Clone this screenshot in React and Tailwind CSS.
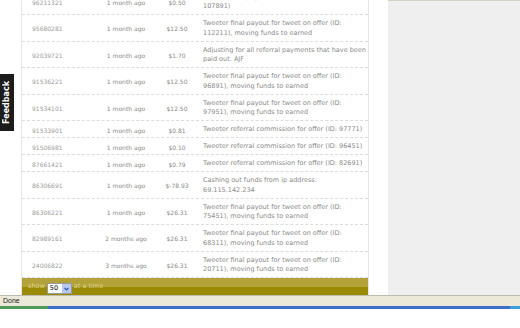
import React from "react";

const rows = [
  { id: "96211321", when: "1 month ago", amount: "$0.50", desc: ["Tweeter final payout for tweet on offer (ID:", "107891)"] },
  { id: "95680281", when: "1 month ago", amount: "$12.50", desc: ["Tweeter final payout for tweet on offer (ID:", "112211), moving funds to earned"] },
  { id: "92039721", when: "1 month ago", amount: "$1.70", desc: ["Adjusting for all referral payments that have been", "paid out. AJF"] },
  { id: "91536221", when: "1 month ago", amount: "$12.50", desc: ["Tweeter final payout for tweet on offer (ID:", "96891), moving funds to earned"] },
  { id: "91534101", when: "1 month ago", amount: "$12.50", desc: ["Tweeter final payout for tweet on offer (ID:", "97951), moving funds to earned"] },
  { id: "91533901", when: "1 month ago", amount: "$0.81", desc: ["Tweeter referral commission for offer (ID: 97771)"] },
  { id: "91506981", when: "1 month ago", amount: "$0.10", desc: ["Tweeter referral commission for offer (ID: 96451)"] },
  { id: "87661421", when: "1 month ago", amount: "$0.79", desc: ["Tweeter referral commission for offer (ID: 82691)"] },
  { id: "86306691", when: "1 month ago", amount: "$-78.93", desc: ["Cashing out funds from ip address:", "69.115.142.234"] },
  { id: "86306221", when: "1 month ago", amount: "$26.31", desc: ["Tweeter final payout for tweet on offer (ID:", "75451), moving funds to earned"] },
  { id: "82989161", when: "2 months ago", amount: "$26.31", desc: ["Tweeter final payout for tweet on offer (ID:", "68311), moving funds to earned"] },
  { id: "24006822", when: "3 months ago", amount: "$26.31", desc: ["Tweeter final payout for tweet on offer (ID:", "20711), moving funds to earned"] },
];

function App() {
  return (
    <div className="relative w-[520px] h-[328px] overflow-hidden bg-white font-['DejaVu_Sans',sans-serif]">
      <div className="flex h-[295px]">
        <div className="w-[21px] bg-white" />
        {/* transactions panel */}
        <div className="flex w-[348px] flex-col border-l border-r border-[#e6e6e6] bg-white">
          <div className="flex-1 overflow-hidden">
            <div className="-mt-[11.5px] text-[#8a8a8a]">
              {rows.map((r) => (
                <div
                  key={r.id}
                  className={`flex border-b border-dashed border-[#dcdcdc] ${r.desc.length > 1 ? "h-[26.5px]" : "h-[17px]"}`}
                >
                  <div className="flex w-[68px] items-center pl-[10px] pt-[2px] text-[6px] text-[#9c9c9c]">{r.id}</div>
                  <div className="flex w-[72px] items-center justify-center whitespace-nowrap pt-[2px] text-[6px]">{r.when}</div>
                  <div className="flex w-[30px] items-center justify-center whitespace-nowrap pt-[2px] text-[6px]">{r.amount}</div>
                  <div className="flex-1 pl-[11px] pt-[4.25px] text-[6.5px] leading-[9.5px]">
                    {r.desc.map((line, i) => (
                      <div key={i} className="whitespace-nowrap">{line}</div>
                    ))}
                  </div>
                </div>
              ))}
            </div>
          </div>
          {/* pager bar */}
          <div className="h-[17px] bg-[linear-gradient(#b3a23a_0%,#b3a23a_50%,#9a8a03_50%,#9a8a03_100%)]">
            <div className="flex h-full items-end gap-[2px] pl-[6px] pb-[1px] text-[6.5px] text-[#ddd48a]">
              <span className="pb-[2px]">show</span>
              <div className="flex h-[11px] w-[25px] items-center border border-[#9a9a9a] bg-white">
                <span className="flex-1 pl-[2px] text-[6.5px] text-black">50</span>
                <span className="flex h-full w-[9px] items-center justify-center bg-[#b7c9f0]">
                  <svg width="5" height="4" viewBox="0 0 5 4">
                    <path d="M0.5 0.8 L2.5 2.8 L4.5 0.8" fill="none" stroke="#2b4f9e" strokeWidth="1.2" />
                  </svg>
                </span>
              </div>
              <span className="pb-[2px]">at a time</span>
            </div>
          </div>
        </div>
        <div className="w-[19px] bg-white" />
        <div className="flex-1 border-t border-[#d6d2c6] bg-[#efefef]" />
      </div>
      {/* browser status bar */}
      <div className="h-px bg-[#bdbab0]" />
      <div className="flex h-[10px] items-center bg-[#ece9d8] pl-[3px] font-['Liberation_Sans',sans-serif] text-[7px] text-[#222]">
        Done
      </div>
      {/* taskbar edge */}
      <div className="flex h-[3px]">
        <div className="w-[48px] bg-[#4f9a55]" />
        <div className="flex-1 bg-[#3d6fc9]" />
        <div className="w-[10px] bg-[#3aa0d8]" />
      </div>
      {/* feedback tab */}
      <div className="absolute left-0 top-[74px] flex h-[57px] w-[14px] items-center justify-center bg-[#1c1c1c]">
        <span className="rotate-180 text-[8px] font-bold text-white [writing-mode:vertical-rl]">Feedback</span>
      </div>
    </div>
  );
}

export default App;
